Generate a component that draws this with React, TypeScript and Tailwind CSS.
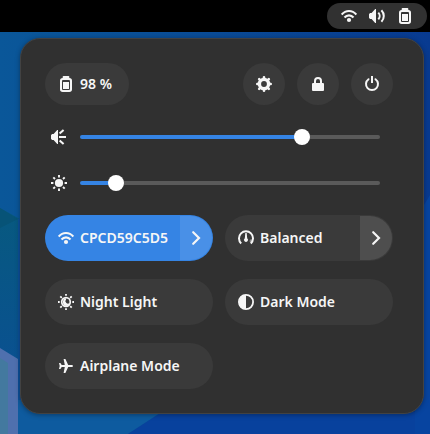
import { useState, type CSSProperties, type ReactNode } from 'react';

function Icon({ children }: { children: ReactNode }) {
  return (
    <svg viewBox="0 0 16 16" className="size-4 shrink-0" fill="currentColor" aria-hidden="true">
      {children}
    </svg>
  );
}

const WifiIcon = () => (
  <Icon>
    <g fill="none" stroke="currentColor" strokeWidth="2.1">
      <path d="M0.7 6.6C4.6 1.8 11.4 1.8 15.3 6.6" />
      <path d="M3.5 9.5C6 6.6 10 6.6 12.5 9.5" />
    </g>
    <circle cx="8" cy="12" r="2.1" />
  </Icon>
);

const VolumeIcon = () => (
  <Icon>
    <path d="M0 6.2 1 5h1.6L6.2 1H7v14h-.8L2.6 11H1L0 9.8z" />
    <g fill="none" stroke="currentColor" strokeWidth="2">
      <path d="M9.3 4.6c1.8 1.9 1.8 4.9 0 6.8" />
      <path d="M12.4 2.2c3.2 3.3 3.2 8.3 0 11.6" />
    </g>
  </Icon>
);

const BatteryIcon = () => (
  <Icon>
    <path
      fillRule="evenodd"
      d="M5.5 0h5a.8.8 0 0 1 .8.8V2A2.7 2.7 0 0 1 14 4.7v8.6a2.7 2.7 0 0 1-2.7 2.7H4.7A2.7 2.7 0 0 1 2 13.3V4.7A2.7 2.7 0 0 1 4.7 2V.8a.8.8 0 0 1 .8-.8zM5 4a1 1 0 0 0-1 1v8a1 1 0 0 0 1 1h6a1 1 0 0 0 1-1V5a1 1 0 0 0-1-1z"
    />
    <path d="M5 6h6v7H5z" />
  </Icon>
);

const GearIcon = () => (
  <Icon>
    <circle cx="8" cy="8" r="4.6" fill="none" stroke="currentColor" strokeWidth="3.4" />
    <g stroke="currentColor" strokeWidth="2.6" strokeLinecap="round">
      <path d="M8 1.3v1.6M8 13.1v1.6M1.3 8h1.6M13.1 8h1.6M3.2 3.2l1.1 1.1M11.7 11.7l1.1 1.1M12.8 3.2l-1.1 1.1M3.2 12.8l1.1-1.1" />
    </g>
  </Icon>
);

const LockIcon = () => (
  <Icon>
    <path d="M5 8V5a3 3 0 0 1 6 0v3" fill="none" stroke="currentColor" strokeWidth="2" />
    <rect x="2" y="7" width="12" height="8" rx="1" />
  </Icon>
);

const PowerIcon = () => (
  <Icon>
    <g fill="none" stroke="currentColor" strokeWidth="2">
      <path d="M4.5 3.2a6 6 0 1 0 7 0" strokeLinecap="round" />
      <path d="M8 0v7" />
    </g>
  </Icon>
);

const SpeakerIcon = () => (
  <Icon>
    <path d="M0 6.2 1 5h1.6L6.2 1H7v14h-.8L2.6 11H1L0 9.8z" />
    <path d="M8 8h7M8.6 4.6 12.6.9M8.6 11.4l4 3.7" stroke="currentColor" strokeWidth="2" />
  </Icon>
);

const BrightnessIcon = () => (
  <Icon>
    <circle cx="8" cy="8" r="4.1" />
    <path
      d="M8 0v2.4M8 13.6V16M0 8h2.4M13.6 8H16M2.3 2.3l1.7 1.7M12 12l1.7 1.7M13.7 2.3 12 4M4 12l-1.7 1.7"
      stroke="currentColor"
      strokeWidth="1.9"
    />
  </Icon>
);

const GaugeIcon = () => (
  <Icon>
    <path d="M3.2 13.4A7 7 0 1 1 12.8 13.4" fill="none" stroke="currentColor" strokeWidth="2" />
    <path d="M7.3 3h1.4l.5 5.2a2 2 0 1 1-2.4 0z" />
    <path d="M12 9.5h2.6l-1.5 3.3-1.6-1.3z" opacity=".45" />
  </Icon>
);

const NightIcon = () => (
  <Icon>
    <circle cx="8" cy="8" r="4.3" fill="none" stroke="currentColor" strokeWidth="1.7" />
    <path d="M8 4.2A4 4 0 0 0 8 12a4 4 0 0 0 3.9-3.4A2.5 2.5 0 1 1 8 5.4z" />
    <path
      d="M8 0v1.7M8 14.3V16M0 8h1.7M14.3 8H16M2.3 2.3l1.5 1.5M12.2 12.2l1.5 1.5M13.7 2.3l-1.5 1.5M3.8 12.2l-1.5 1.5"
      stroke="currentColor"
      strokeWidth="1.8"
    />
  </Icon>
);

const ContrastIcon = () => (
  <Icon>
    <circle cx="8" cy="8" r="7.1" fill="none" stroke="currentColor" strokeWidth="1.8" />
    <path d="M8 1a7 7 0 0 0 0 14z" />
  </Icon>
);

const PlaneIcon = () => (
  <Icon>
    <path d="M15 8c0-.8-.8-1.1-1.6-1.1H10.2L7.4 1H5.6l1.2 5.9H3.7L2.4 5H1l.7 3L1 11h1.4l1.3-1.9h3.1L5.6 15h1.8l2.8-5.9h3.2c.8 0 1.6-.3 1.6-1.1z" />
  </Icon>
);

const ChevronIcon = () => (
  <Icon>
    <path
      d="M5.2 2.2 11 8l-5.8 5.8"
      fill="none"
      stroke="currentColor"
      strokeWidth="2.2"
      strokeLinecap="round"
    />
  </Icon>
);

function Wallpaper() {
  return (
    <svg
      className="absolute inset-0 -z-10 size-full"
      viewBox="0 0 430 434"
      preserveAspectRatio="xMidYMid slice"
      aria-hidden="true"
    >
      <defs>
        <linearGradient id="sky" x1="0" x2="1" y1="0" y2="0">
          <stop offset="0" stopColor="#0a5799" />
          <stop offset=".5" stopColor="#0a4b96" />
          <stop offset="1" stopColor="#083a90" />
        </linearGradient>
        <linearGradient id="left" x1="0" x2="0" y1="0" y2="1">
          <stop offset="0" stopColor="#07597f" />
          <stop offset="1" stopColor="#0a5092" />
        </linearGradient>
      </defs>
      <rect width="430" height="434" fill="url(#sky)" />
      <path d="M0 208 40 230V380L0 350z" fill="url(#left)" />
      <path d="M0 208 18 219 0 228z" fill="#075377" />
      <path d="M18 219h22v190H18z" fill="#0c509a" />
      <path d="M0 348 18 359V434H0z" fill="#4f70ae" />
      <path d="M0 358 8 363V434H0z" fill="#43799f" />
      <path d="M18 400H180L128 434H18z" fill="#0e5b9f" />
      <path d="M162 412H430V434H128z" fill="#08419d" />
      <path d="M415 220 430 195V434H415z" fill="#0744a0" />
    </svg>
  );
}

function RoundButton({ label, children }: { label: string; children: ReactNode }) {
  return (
    <button
      type="button"
      aria-label={label}
      className="flex size-[42px] items-center justify-center rounded-full bg-[#3a3a3a]"
    >
      {children}
    </button>
  );
}

function Slider({ label, icon, initial }: { label: string; icon: ReactNode; initial: number }) {
  const [value, setValue] = useState(initial);
  return (
    <label className="flex h-[46px] items-center gap-[13px] pr-[13px] pl-1.5">
      {icon}
      <input
        type="range"
        aria-label={label}
        min={0}
        max={1000}
        value={value}
        onChange={(e) => setValue(Number(e.target.value))}
        style={{ '--fill': `${value / 10}%` } as CSSProperties}
        className="h-4 min-w-0 flex-1 appearance-none bg-transparent [&::-webkit-slider-runnable-track]:h-1 [&::-webkit-slider-runnable-track]:rounded-full [&::-webkit-slider-runnable-track]:bg-[linear-gradient(to_right,#3584e4_var(--fill),#5a5a5a_var(--fill))] [&::-webkit-slider-thumb]:-mt-1.5 [&::-webkit-slider-thumb]:size-4 [&::-webkit-slider-thumb]:appearance-none [&::-webkit-slider-thumb]:rounded-full [&::-webkit-slider-thumb]:bg-white"
      />
    </label>
  );
}

type TileProps = { label: string; icon: ReactNode; active?: boolean; menu?: boolean };

function Tile({ label, icon, active = false, menu = false }: TileProps) {
  return (
    <div
      className={`flex h-[46px] overflow-hidden rounded-full ${active ? 'bg-[#3584e4]' : 'bg-[#3a3a3a]'}`}
    >
      <button
        type="button"
        aria-pressed={active}
        className="flex min-w-0 flex-1 items-center gap-1.5 pl-[13px] text-left whitespace-nowrap"
      >
        {icon}
        {label}
      </button>
      {menu && (
        <button
          type="button"
          aria-label={`${label} menu`}
          className={`my-px mr-px flex w-8 items-center justify-center rounded-r-full ${active ? 'bg-[#4990e7]' : 'bg-[#4e4e4e]'}`}
        >
          <ChevronIcon />
        </button>
      )}
    </div>
  );
}

export default function App() {
  return (
    <div className="relative isolate min-h-screen font-['Noto_Sans',sans-serif] text-sm font-semibold text-[#f6f6f6]">
      <Wallpaper />
      <header className="flex h-8 items-center justify-end bg-black pr-[3px]">
        <button
          type="button"
          aria-label="System menu"
          className="flex h-[26px] items-center gap-3 rounded-full bg-[#313131] px-3.5"
        >
          <WifiIcon />
          <VolumeIcon />
          <BatteryIcon />
        </button>
      </header>
      <div className="flex justify-end pt-1.5 pr-1.5 pl-5">
        <main className="w-full max-w-[404px] rounded-[20px] border border-[#424242] bg-[#303030] pt-6 pr-[30px] pb-6 pl-6 shadow-[0_1px_5px_rgba(0,0,0,0.35)]">
          <div className="flex items-center gap-3">
            <button
              type="button"
              className="mr-auto flex h-[42px] min-w-[84px] items-center gap-1.5 rounded-full bg-[#3a3a3a] px-[13px]"
            >
              <BatteryIcon />
              98 %
            </button>
            <RoundButton label="Settings">
              <GearIcon />
            </RoundButton>
            <RoundButton label="Lock screen">
              <LockIcon />
            </RoundButton>
            <RoundButton label="Power off">
              <PowerIcon />
            </RoundButton>
          </div>
          <div className="py-[9px]">
            <Slider label="Volume" icon={<SpeakerIcon />} initial={752} />
            <Slider label="Brightness" icon={<BrightnessIcon />} initial={97} />
          </div>
          <div className="grid grid-cols-2 gap-x-3 gap-y-[18px]">
            <Tile label="CPCD59C5D5" icon={<WifiIcon />} active menu />
            <Tile label="Balanced" icon={<GaugeIcon />} menu />
            <Tile label="Night Light" icon={<NightIcon />} />
            <Tile label="Dark Mode" icon={<ContrastIcon />} />
            <Tile label="Airplane Mode" icon={<PlaneIcon />} />
          </div>
        </main>
      </div>
    </div>
  );
}
